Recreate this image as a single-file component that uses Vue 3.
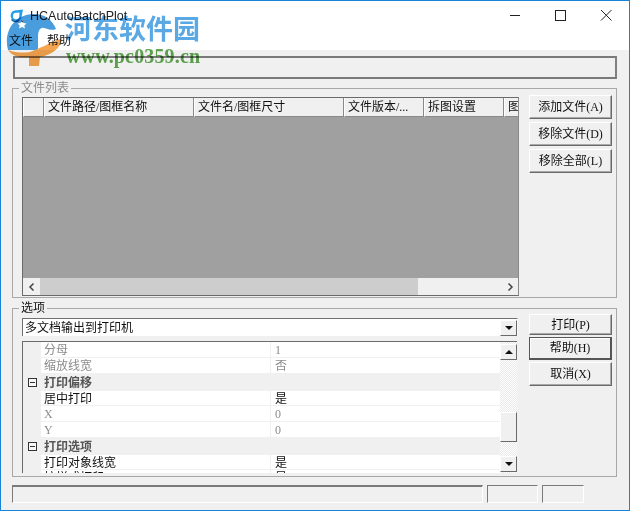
<script setup>
const cols = [
  { t: '', w: 21 },
  { t: '文件路径/图框名称', w: 150 },
  { t: '文件名/图框尺寸', w: 150 },
  { t: '文件版本/...', w: 80 },
  { t: '拆图设置', w: 80 },
  { t: '图', w: 14 }
]
const rows = [
  { k: '分母', v: '1', cls: 'dim', gut: false },
  { k: '缩放线宽', v: '否', cls: 'dim', gut: false },
  { k: '打印偏移', v: '', cls: 'grp', gut: true },
  { k: '居中打印', v: '是', cls: 'short', gut: false },
  { k: 'X', v: '0', cls: 'dim', gut: false },
  { k: 'Y', v: '0', cls: 'dim', gut: false },
  { k: '打印选项', v: '', cls: 'grp', gut: true },
  { k: '打印对象线宽', v: '是', cls: 'short', gut: false },
  { k: '按样式打印', v: '是', cls: '', gut: false }
]
</script>

<template>
  <div class="win">
    <header class="title">
      <svg class="appicon" width="16" height="16" viewBox="0 0 16 16">
        <path d="M14 1.500L8.500 2.300A5.600 5.600 0 1 0 12.800 7.500z" fill="#1f9fe6" />
        <path d="M10.500 4.500L7.500 4.800A3.200 3.200 0 1 0 10.300 8z" fill="#fff" />
        <path d="M2.500 11.500A5.800 5.800 0 0 0 10 12.500" stroke="#15598c" stroke-width="1.300" fill="none" />
        <path d="M12 12.500l2 1.500" stroke="#555" stroke-width="1.300" />
      </svg>
      <span class="title-text">HCAutoBatchPlot</span>
      <div class="caption">
        <svg width="46" height="29" viewBox="0 0 46 29"><path d="M20 14.500h10" stroke="#222" /></svg>
        <svg width="46" height="29" viewBox="0 0 46 29"><rect x="19.500" y="9.500" width="10" height="10" fill="none" stroke="#222" /></svg>
        <svg width="46" height="29" viewBox="0 0 46 29"><path d="M19 9l10.500 10.500M29.500 9L19 19.500" stroke="#222" fill="none" /></svg>
      </div>
    </header>
    <nav class="menu"><span>文件</span><span>帮助</span></nav>

    <main class="client">
      <div class="toolbar"></div>

      <fieldset class="group files">
        <legend class="muted">文件列表</legend>
        <div class="files-body">
          <div class="list">
            <div class="list-head">
              <div v-for="(c, i) in cols" :key="i" class="th" :style="{ width: c.w + 'px' }">{{ c.t }}</div>
            </div>
            <div class="list-fill"></div>
            <div class="hscroll">
              <span class="arrow">
                <svg width="8" height="10" viewBox="0 0 8 10"><path d="M5.500 1.500L2 5l3.500 3.500" fill="none" stroke="#444" stroke-width="1.500" /></svg>
              </span>
              <div class="hthumb"></div>
              <div class="htrack"></div>
              <span class="arrow">
                <svg width="8" height="10" viewBox="0 0 8 10"><path d="M2.500 1.500L6 5 2.500 8.500" fill="none" stroke="#444" stroke-width="1.500" /></svg>
              </span>
            </div>
          </div>
          <div class="btns">
            <button>添加文件(A)</button>
            <button>移除文件(D)</button>
            <button>移除全部(L)</button>
          </div>
        </div>
      </fieldset>

      <fieldset class="group opts">
        <legend>选项</legend>
        <div class="opts-body">
          <div class="opts-left">
            <div class="combo">
              <span class="combo-text">多文档输出到打印机</span>
              <span class="sbtn"><i class="tri down"></i></span>
            </div>
            <div class="grid">
              <div class="grid-rows">
                <div v-for="r in rows" :key="r.k" class="row" :class="r.cls">
                  <div class="gut"><span v-if="r.gut" class="minus"></span></div>
                  <div class="key">{{ r.k }}</div>
                  <div class="val">{{ r.v }}</div>
                </div>
              </div>
              <div class="vscroll">
                <span class="sbtn"><i class="tri up"></i></span>
                <div class="vtrack"><div class="vthumb"></div></div>
                <span class="sbtn"><i class="tri down"></i></span>
              </div>
            </div>
          </div>
          <div class="btns tight">
            <button class="b1">打印(P)</button>
            <button class="def">帮助(H)</button>
            <button>取消(X)</button>
          </div>
        </div>
      </fieldset>

      <footer class="status">
        <div class="cell a"></div>
        <div class="cell b"></div>
        <div class="cell c"></div>
      </footer>
    </main>

    <div class="mark">
      <svg class="logo" width="70" height="72" viewBox="0 0 70 72">
        <path d="M8 50C3 31 15 14 34 14c10 0 18 5 22 15-4 2-8 0-12-1-4-1-6 3-6 9v13z" fill="#4a9ddc" />
        <path d="M22 20l1.500 3 3 .5-2.200 2 .7 3-3-1.500-3 1.500.7-3-2.200-2 3-.5z" fill="#fff" />
        <path d="M8 50c8 3 16 3 22 2 8-3 18-8 32-14-1 10-10 17-22 19l-1 9H29v-9C19 58 12 56 8 50z" fill="#f5a550" />
      </svg>
      <span class="mark-cn">河东软件园</span>
      <span class="mark-url">www.pc0359.cn</span>
    </div>
  </div>
</template>

<style>
html, body { margin: 0; background: #f0f0f0; overflow: hidden; }
</style>

<style scoped>
.win {
  width: 630px; height: 511px; box-sizing: border-box;
  border: 1px solid #1883d7; background: #f0f0f0;
  display: flex; flex-direction: column; position: relative; overflow: hidden;
  font-family: "Liberation Serif", "Noto Sans CJK SC", serif; font-size: 12px; color: #111;
}
.title { height: 29px; background: #fff; display: flex; align-items: center; flex: none; }
.appicon { margin: 0 5px 0 8px; }
.title-text { font-family: "Liberation Sans", sans-serif; font-size: 12.500px; color: #222; margin-top: 1px; }
.caption { margin-left: auto; display: flex; margin-right: 1px; }
.caption svg { display: block; }
.menu { height: 20px; background: #fff; display: flex; gap: 14px; padding-left: 8px; align-items: center; flex: none; color: #222; }
.client { flex: 1; display: flex; flex-direction: column; padding: 6px 12px 0 11px; min-height: 0; }
.toolbar { height: 23px; flex: none; box-sizing: border-box; width: 604px; margin-left: 1px; border: 2px solid; border-color: #7a7a7a #808080 #7a7a7a #7a7a7a; }
.group { margin: 0; padding: 0 0 0 9px; border: 1px solid #a8a8a8; min-width: 0; box-sizing: border-box; width: 605px; }
.group legend { padding: 0 2px; margin-left: -3px; line-height: 14px; font-size: 12px; }
.muted { color: #8b8b8b; }
.files { height: 217px; margin-top: 2px; flex: none; }
.files-body { display: flex; gap: 10px; }
.list { width: 497px; height: 199px; margin-top: 2px; box-sizing: border-box; border: 1px solid #6b6b6b; border-right-color: #8a8a8a; display: flex; flex-direction: column; background: #a0a0a0; overflow: hidden; flex: none; }
.list-head { display: flex; height: 19px; flex: none; background: #f0f0f0; }
.th { box-sizing: border-box; border-right: 1px solid #8a8a8a; border-bottom: 1px solid #8a8a8a; border-left: 1px solid #fff; padding-left: 3px; line-height: 18px; white-space: nowrap; overflow: hidden; flex: none; }
.th:last-child { border-right: 0; }
.list-fill { flex: 1; background: #a0a0a0; }
.hscroll { height: 17px; flex: none; display: flex; background: #f0f0f0; }
.hthumb { width: 378px; background: #cdcdcd; }
.htrack { flex: 1; }
.arrow { width: 17px; display: flex; align-items: center; justify-content: center; flex: none; }
.arrow svg { display: block; }
.btns { display: flex; flex-direction: column; gap: 3px; width: 83px; flex: none; }
.btns button {
  height: 24px; width: 83px; padding: 0 0 2px; box-sizing: border-box; background: #f0f0f0;
  border: 1px solid; border-color: #fff #6a6a6a #6a6a6a #fff; box-shadow: inset -1px -1px 0 #a8a8a8;
  font: 12px "Liberation Serif", "Noto Sans CJK SC", serif; color: #111;
}
.btns.tight { gap: 2px; margin-top: -4px; }
.btns .b1 { height: 21px; }
.btns .def { height: 23px; border: 1px solid #555; border-width: 1px 2px 2px 1px; box-shadow: inset 1px 1px 0 #fff; }
.opts { height: 176px; margin-top: 3px; flex: none; }
.opts-body { display: flex; padding-top: 3px; gap: 10px; }
.opts-left { width: 497px; flex: none; }
.combo { height: 18px; background: #fff; width: 496px; border-top: 1px solid #707070; border-left: 1px solid #707070; border-right: 1px solid #f8f8f8; box-sizing: border-box; display: flex; justify-content: space-between; align-items: center; }
.combo-text { padding: 1px 0 0 2px; line-height: 16px; }
.sbtn { width: 17px; height: 16px; box-sizing: border-box; background: #f0f0f0; border: 1px solid; border-color: #fff #6a6a6a #6a6a6a #fff; display: flex; align-items: center; justify-content: center; flex: none; }
.tri { width: 0; height: 0; border-left: 4px solid transparent; border-right: 4px solid transparent; }
.tri.down { border-top: 4px solid #111; }
.tri.up { border-bottom: 4px solid #111; }
.grid { width: 495px; height: 132px; margin-top: 5px; border-top: 1px solid #6b6b6b; border-left: 1px solid #6b6b6b; box-sizing: border-box; display: flex; background: #fff; overflow: hidden; }
.grid-rows { width: 477px; flex: none; overflow: hidden; }
.row { height: 16px; display: flex; box-sizing: border-box; line-height: 15px; padding-top: 1px; box-shadow: inset 0 -1px 0 #f0f0f0; white-space: nowrap; }
.row.short { height: 15px; }
.row.grp { height: 17px; background: #f0f0f0; font-weight: 700; color: #555; padding-top: 2px; }
.row.dim { color: #8c8c8c; }
.gut { width: 18px; background: #f0f0f0; flex: none; display: flex; align-items: center; justify-content: center; margin-top: -2px; }
.row:not(.grp) .gut { margin-top: -1px; }
.minus { width: 9px; height: 9px; box-sizing: border-box; border: 1px solid #333; position: relative; background: #f7f7f7; }
.minus::after { content: ""; position: absolute; left: 1px; right: 1px; top: 3px; height: 1px; background: #333; }
.key { width: 230px; padding-left: 3px; box-sizing: border-box; border-right: 1px solid #f0f0f0; flex: none; margin-top: -1px; padding-top: 1px; }
.val { padding-left: 4px; flex: 1; }
.grp .key { border: 0; }
.vscroll { width: 17px; flex: none; display: flex; flex-direction: column; padding: 2px 0 1px; box-sizing: border-box; background: repeating-conic-gradient(#e9e9e9 0 25%, #fff 0 50%) 0 0 / 2px 2px; }
.vtrack { flex: 1; display: flex; flex-direction: column; justify-content: flex-end; padding-bottom: 14px; }
.vthumb { height: 30px; background: #f0f0f0; border: 1px solid; border-color: #fff #6a6a6a #6a6a6a #fff; box-sizing: border-box; }
.status { display: flex; gap: 4px; margin-top: 8px; height: 18px; flex: none; }
.cell { box-sizing: border-box; border: 1px solid; border-color: #7a7a7a #fff #fff #7a7a7a; height: 18px; }
.a { width: 471px; border-top-width: 2px; }
.b { width: 51px; }
.c { width: 42px; }
.mark { position: absolute; left: -1px; top: -1px; width: 210px; height: 72px; pointer-events: none; mix-blend-mode: multiply; }
.logo { position: absolute; left: 0; top: 0; }
.mark-cn { position: absolute; left: 65px; top: 12px; font: 700 27px/32px "Noto Sans CJK SC", sans-serif; color: #5aa8e4; white-space: nowrap; }
.mark-url { position: absolute; left: 66px; top: 45px; font: 700 20px/22px "Liberation Serif", serif; color: #5fa84f; white-space: nowrap; letter-spacing: .15px; }
</style>
